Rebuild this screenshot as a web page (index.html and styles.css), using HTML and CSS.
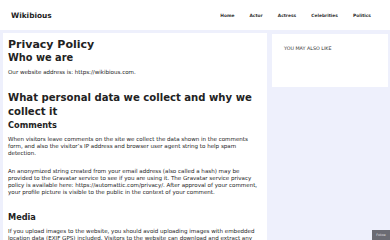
FILE: index.html
```html
<!DOCTYPE html>
<html>
<head>
<meta charset="utf-8">
<link rel="stylesheet" href="styles.css">
</head>
<body>
<header class="site-header">
  <div class="logo">Wikibious</div>
  <nav class="nav">
    <a>Home</a>
    <a>Actor</a>
    <a>Actress</a>
    <a>Celebrities</a>
    <a>Politics</a>
  </nav>
</header>
<div class="page">
  <main class="content">
    <h1 class="title">Privacy Policy</h1>
    <h2 class="h2 first">Who we are</h2>
    <p>Our website address is: https://wikibious.com.</p>
    <h2 class="h2 big">What personal data we collect and why we collect it</h2>
    <h3 class="h3">Comments</h3>
    <p>When visitors leave comments on the site we collect the data shown in the comments form, and also the visitor’s IP address and browser user agent string to help spam detection.</p>
    <p class="gap">An anonymized string created from your email address (also called a hash) may be provided to the Gravatar service to see if you are using it. The Gravatar service privacy policy is available here: https://automattic.com/privacy/. After approval of your comment, your profile picture is visible to the public in the context of your comment.</p>
    <h3 class="h3 media">Media</h3>
    <p>If you upload images to the website, you should avoid uploading images with embedded location data (EXIF GPS) included. Visitors to the website can download and extract any location data from images on the website.</p>
  </main>
  <aside class="sidebar">
    <div class="widget">YOU MAY ALSO LIKE</div>
  </aside>
</div>
<div class="follow">Follow</div>
</body>
</html>
```
FILE: styles.css
```css
html, body {
  margin: 0;
  padding: 0;
  height: 100%;
  overflow: hidden;
}
body {
  background: #eef0fc;
  font-family: "DejaVu Sans", sans-serif;
  color: #222;
}
.site-header {
  height: 30px;
  background: #fff;
  display: flex;
  align-items: center;
  justify-content: space-between;
  padding: 0 19px 0 11px;
}
.logo {
  font-weight: bold;
  font-size: 7.4px;
  color: #222;
}
.nav {
  display: flex;
  gap: 15px;
}
.nav a {
  font-size: 4.4px;
  font-weight: bold;
  color: #333;
}
.page {
  display: flex;
  align-items: flex-start;
  gap: 5px;
  padding: 3px 2px 0 3px;
}
.content {
  width: 250px;
  flex: none;
  background: #fff;
  padding: 5px 9px 5px 5px;
  height: 300px;
}
.title {
  font-size: 11px;
  line-height: 13px;
  margin: 0;
}
.h2 {
  font-size: 9.8px;
  line-height: 13px;
  margin: 0;
}
.h2.big {
  margin-top: 15px;
  font-size: 10.1px;
  line-height: 14px;
}
.h3 {
  font-size: 8.2px;
  line-height: 12px;
  margin: 0 0 1px;
}
.h3.media {
  margin-top: 15px;
}
p {
  font-size: 5.55px;
  line-height: 7px;
  margin: 5px 0 0;
  color: #222;
}
p.gap {
  margin-top: 11px;
}
.sidebar {
  flex: 1;
  background: #fff;
  margin-top: 1px;
  height: 53px;
  padding: 12px 12px;
  box-sizing: border-box;
}
.widget {
  font-size: 4.8px;
  color: #333;
}
.follow {
  position: fixed;
  right: 0;
  bottom: 0;
  width: 18px;
  height: 10px;
  background: #6b6b73;
  color: #e8e8e8;
  font-size: 3px;
  line-height: 10px;
  text-align: center;
}
```
